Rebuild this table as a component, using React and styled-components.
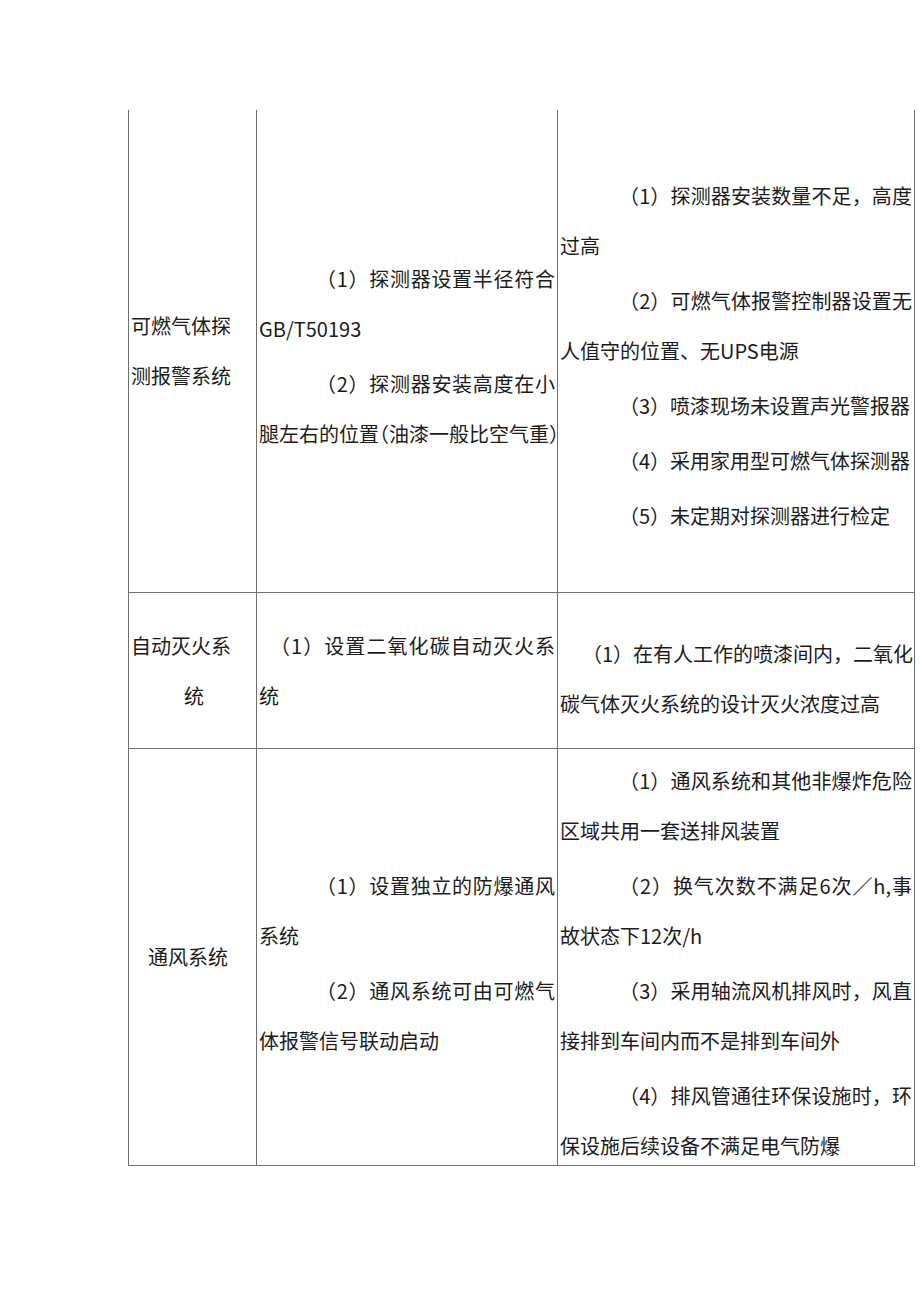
import React from 'react'
import styled, { createGlobalStyle, css } from 'styled-components'

const Global = createGlobalStyle`
  html, body {
    margin: 0;
    padding: 0;
    background: #fff;
  }
  body {
    font-family: "Noto Sans CJK SC", "Noto Sans", sans-serif;
    color: #1c1c1c;
  }
`

const Page = styled.div`
  width: 920px;
  height: 1301px;
  padding: 110px 0 0 128px;
  box-sizing: border-box;
`

const Table = styled.div`
  display: grid;
  grid-template-columns: 128px 301px 358px;
  grid-template-rows: 483px 156px 417px;
  width: 787px;
`

const Cell = styled.div`
  border-left: 1px solid #6f6f6f;
  border-bottom: 1px solid #6f6f6f;
  ${p => p.last && css`border-right: 1px solid #6f6f6f;`}
  display: flex;
  flex-direction: column;
  justify-content: center;
  padding: ${p => p.shift || 0}px 2px 0 2px;
  box-sizing: border-box;
  font-size: 20px;
`

const Para = styled.div`
  & + & {
    margin-top: 5px;
  }
`

const Line = styled.div`
  height: 50px;
  line-height: 50px;
  white-space: nowrap;
  padding-left: ${p => p.indent || 0}px;
  text-align: justify;
  text-align-last: ${p => (p.fill ? 'justify' : 'left')};
`

const Halt = styled.span`
  font-feature-settings: "halt";
`

const rows = [
  {
    h: 0,
    name: [{ t: '可燃气体探' }, { t: '测报警系统' }],
    measures: [
      [{ t: '（1）探测器设置半径符合', i: 57, f: true }, { t: 'GB/T50193' }],
      [
        { t: '（2）探测器安装高度在小', i: 57, f: true },
        {
          t: (
            <>
              腿左右的位置<Halt>（</Halt>油漆一般比空气重<Halt>）</Halt>
            </>
          ),
          f: true,
        },
      ],
    ],
    issues: [
      [{ t: '（1）探测器安装数量不足，高度', i: 59, f: true }, { t: '过高' }],
      [{ t: '（2）可燃气体报警控制器设置无', i: 59, f: true }, { t: '人值守的位置、无UPS电源' }],
      [{ t: '（3）喷漆现场未设置声光警报器', i: 59 }],
      [{ t: '（4）采用家用型可燃气体探测器', i: 59 }],
      [{ t: '（5）未定期对探测器进行检定', i: 59 }],
    ],
    shift: 10,
    issueShift: 10,
  },
  {
    name: [{ t: '自动灭火系' }, { t: '统', i: 53 }],
    measures: [[{ t: '（1）设置二氧化碳自动灭火系', i: 11, f: true }, { t: '统' }]],
    issues: [[{ t: '（1）在有人工作的喷漆间内，二氧化', i: 22, f: true }, { t: '碳气体灭火系统的设计灭火浓度过高' }]],
    shift: 0,
    issueShift: 16,
  },
  {
    name: [{ t: '通风系统', i: 17 }],
    measures: [
      [{ t: '（1）设置独立的防爆通风', i: 57, f: true }, { t: '系统' }],
      [{ t: '（2）通风系统可由可燃气', i: 57, f: true }, { t: '体报警信号联动启动' }],
    ],
    issues: [
      [{ t: '（1）通风系统和其他非爆炸危险', i: 59, f: true }, { t: '区域共用一套送排风装置' }],
      [{ t: '（2）换气次数不满足6次／h,事', i: 59, f: true }, { t: '故状态下12次/h' }],
      [{ t: '（3）采用轴流风机排风时，风直', i: 59, f: true }, { t: '接排到车间内而不是排到车间外' }],
      [{ t: '（4）排风管通往环保设施时，环', i: 59, f: true }, { t: '保设施后续设备不满足电气防爆' }],
    ],
    shift: 12,
    issueShift: 12,
  },
]

function Lines({ lines }) {
  return lines.map((l, k) => (
    <Line key={k} indent={l.i} fill={l.f}>
      {l.t}
    </Line>
  ))
}

export default function App() {
  return (
    <Page>
      <Global />
      <Table>
        {rows.map((r, idx) => (
          <React.Fragment key={idx}>
            <Cell>
              <Para>
                <Lines lines={r.name} />
              </Para>
            </Cell>
            <Cell shift={r.shift}>
              {r.measures.map((p, k) => (
                <Para key={k}>
                  <Lines lines={p} />
                </Para>
              ))}
            </Cell>
            <Cell last shift={r.issueShift}>
              {r.issues.map((p, k) => (
                <Para key={k}>
                  <Lines lines={p} />
                </Para>
              ))}
            </Cell>
          </React.Fragment>
        ))}
      </Table>
    </Page>
  )
}
